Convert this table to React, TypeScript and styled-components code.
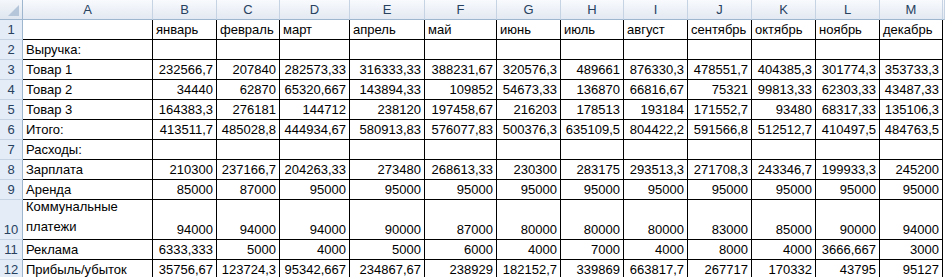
import React from "react";
import styled, { createGlobalStyle } from "styled-components";

const GlobalStyle = createGlobalStyle`
  html, body {
    margin: 0;
    padding: 0;
    background: #ffffff;
    overflow: hidden;
  }
  body {
    font-family: "Liberation Sans", Arial, sans-serif;
    font-size: 13px;
    color: #000000;
  }
`;

const Sheet = styled.div`
  display: grid;
  grid-template-columns: 23px 130px 64px 63px 70px 75px 72px 64px 63px 64px 64px 64px 64px 63px 1fr;
  grid-template-rows: 20px repeat(9, 20px) 40px 20px 20px;
  width: 945px;
  height: 277px;
  overflow: hidden;
`;

const Corner = styled.div`
  box-sizing: border-box;
  display: flex;
  align-items: flex-end;
  justify-content: flex-end;
  padding: 0 3px 3px 0;
  background: linear-gradient(#f4f7fb, #dfe6ef);
  border-right: 1px solid #9eb6ce;
  border-bottom: 1px solid #9eb6ce;
`;

const ColHead = styled.div`
  box-sizing: border-box;
  display: flex;
  align-items: center;
  justify-content: center;
  background: linear-gradient(#f8fafd, #e3e9f2);
  border-right: 1px solid #c5d3e3;
  border-bottom: 1px solid #9eb6ce;
  color: #27415f;
  line-height: 15px;
  padding-bottom: 1px;
`;

const RowHead = styled.div`
  box-sizing: border-box;
  display: flex;
  align-items: flex-end;
  justify-content: center;
  background: #e4ecf7;
  border-right: 1px solid #9eb6ce;
  border-bottom: 1px solid #c5d3e3;
  color: #27415f;
  line-height: 15px;
  padding-bottom: 2px;
`;

const Cell = styled.div<{ $align?: "left" | "right"; $wrap?: boolean }>`
  box-sizing: border-box;
  display: flex;
  align-items: flex-end;
  justify-content: ${(p) => (p.$align === "right" ? "flex-end" : "flex-start")};
  border-right: 1px solid #000000;
  border-bottom: 1px solid #000000;
  padding: 0 3px 2px 3px;
  line-height: ${(p) => (p.$wrap ? "20px" : "15px")};
  white-space: ${(p) => (p.$wrap ? "normal" : "nowrap")};
  overflow: hidden;
`;

const Empty = styled.div`
  background: #ffffff;
`;

const columns = ["A", "B", "C", "D", "E", "F", "G", "H", "I", "J", "K", "L", "M", ""];

const months = [
  "январь",
  "февраль",
  "март",
  "апрель",
  "май",
  "июнь",
  "июль",
  "август",
  "сентябрь",
  "октябрь",
  "ноябрь",
  "декабрь",
];

type Row = { label: string; values: string[]; wrap?: boolean };

const rows: Row[] = [
  { label: "Выручка:", values: [] },
  {
    label: "Товар 1",
    values: ["232566,7", "207840", "282573,33", "316333,33", "388231,67", "320576,3", "489661", "876330,3", "478551,7", "404385,3", "301774,3", "353733,3"],
  },
  {
    label: "Товар 2",
    values: ["34440", "62870", "65320,667", "143894,33", "109852", "54673,33", "136870", "66816,67", "75321", "99813,33", "62303,33", "43487,33"],
  },
  {
    label: "Товар 3",
    values: ["164383,3", "276181", "144712", "238120", "197458,67", "216203", "178513", "193184", "171552,7", "93480", "68317,33", "135106,3"],
  },
  {
    label: "Итого:",
    values: ["413511,7", "485028,8", "444934,67", "580913,83", "576077,83", "500376,3", "635109,5", "804422,2", "591566,8", "512512,7", "410497,5", "484763,5"],
  },
  { label: "Расходы:", values: [] },
  {
    label: "Зарплата",
    values: ["210300", "237166,7", "204263,33", "273480", "268613,33", "230300", "283175", "293513,3", "271708,3", "243346,7", "199933,3", "245200"],
  },
  {
    label: "Аренда",
    values: ["85000", "87000", "95000", "95000", "95000", "95000", "95000", "95000", "95000", "95000", "95000", "95000"],
  },
  {
    label: "Коммунальные платежи",
    wrap: true,
    values: ["94000", "94000", "94000", "90000", "87000", "80000", "80000", "80000", "83000", "85000", "90000", "94000"],
  },
  {
    label: "Реклама",
    values: ["6333,333", "5000", "4000", "5000", "6000", "4000", "7000", "4000", "8000", "4000", "3666,667", "3000"],
  },
  {
    label: "Прибыль/убыток",
    values: ["35756,67", "123724,3", "95342,667", "234867,67", "238929", "182152,7", "339869", "663817,7", "267717", "170332", "43795", "95127"],
  },
];

const App = () => {
  return (
    <>
      <GlobalStyle />
      <Sheet>
        <Corner>
          <svg width="11" height="11" viewBox="0 0 11 11">
            <polygon points="11,0 11,11 0,11" fill="#b6c6da" />
          </svg>
        </Corner>
        {columns.map((c, i) => (
          <ColHead key={"h" + i}>{c}</ColHead>
        ))}

        <RowHead>1</RowHead>
        <Cell />
        {months.map((m) => (
          <Cell key={m}>{m}</Cell>
        ))}
        <Empty />

        {rows.map((r, i) => (
          <React.Fragment key={r.label}>
            <RowHead>{i + 2}</RowHead>
            <Cell $wrap={r.wrap}>{r.label}</Cell>
            {months.map((m, j) => (
              <Cell key={m} $align="right">
                {r.values[j] || ""}
              </Cell>
            ))}
            <Empty />
          </React.Fragment>
        ))}
      </Sheet>
    </>
  );
};

export default App;
